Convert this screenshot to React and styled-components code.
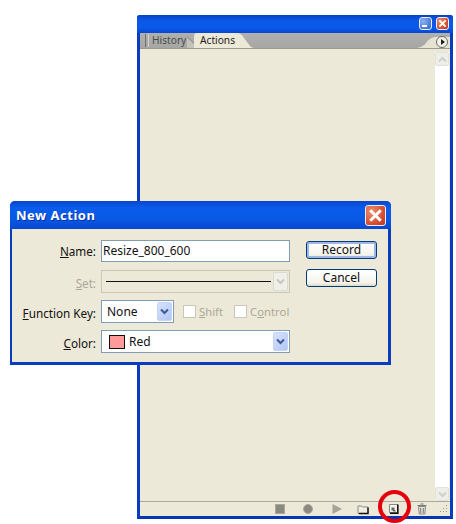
import React from "react";
import styled, { createGlobalStyle } from "styled-components";

const GlobalStyle = createGlobalStyle`
  html, body { margin: 0; padding: 0; background: #fff; }
  body { font-family: "Noto Sans", "Liberation Sans", Arial, sans-serif; }
`;

const Page = styled.div`
  position: relative;
  width: 456px;
  height: 524px;
  overflow: hidden;
  padding: 15px 3px 5px 137px;
  box-sizing: border-box;
`;

const Panel = styled.div`
  height: 100%;
  display: flex;
  flex-direction: column;
  box-sizing: border-box;
  border: solid #0a3cc0;
  border-width: 0 3px 3px 3px;
  border-bottom-color: #0636b4;
  border-radius: 3px 3px 0 0;
  background: #ece9d8;
`;

const PanelTitle = styled.div`
  height: 18px;
  flex: none;
  margin: 0 -3px;
  padding: 2px 4px 0 0;
  box-sizing: border-box;
  display: flex;
  justify-content: flex-end;
  gap: 4px;
  border-radius: 3px 3px 0 0;
  background: linear-gradient(#0b3fc6 0%, #0a58e6 30%, #0a5aea 70%, #0648d2 100%);
`;

const TitleButton = styled.div`
  width: ${(p) => p.$size}px;
  height: ${(p) => p.$size}px;
  box-sizing: border-box;
  border: 1px solid #e8eefa;
  border-radius: 3px;
  display: flex;
  align-items: center;
  justify-content: center;
  background: ${(p) =>
    p.$close
      ? "radial-gradient(circle at 30% 30%, #ec8f70, #d4482a 70%, #b8381c)"
      : "radial-gradient(circle at 30% 30%, #8fb0ee, #3f70d8 80%)"};
`;

const TabStrip = styled.div`
  height: 15px;
  flex: none;
  display: flex;
  align-items: flex-end;
  padding-left: 5px;
  background: linear-gradient(#b0b0ae, #a6a6a4);
  border-bottom: 1px solid #9c9a8c;
  position: relative;
`;

const GripLine = styled.div`
  width: 2px;
  height: 13px;
  margin-bottom: 1px;
  flex: none;
  border-left: 1px solid #70706c;
  border-right: 1px solid #cfcfcc;
`;

const Tab = styled.div`
  height: 15px;
  box-sizing: border-box;
  flex: none;
  font-size: 10.2px;
  line-height: 15px;
  color: ${(p) => (p.$active ? "#1c1c1c" : "#4a4a48")};
`;

const HistoryTab = styled(Tab)`
  width: 45px;
  padding-left: 3px;
  position: relative;
  &::after {
    content: "";
    position: absolute;
    right: 0;
    bottom: 0;
    width: 7px;
    height: 14px;
    background: linear-gradient(45deg, #c4c3ba 45%, #8c8c88 60%, transparent 62%);
  }
`;

const ActionsTab = styled(Tab)`
  width: 60px;
  padding-left: 6px;
  background: #ece9d8;
  clip-path: path("M0 15 V3 Q0 0 3 0 H43 Q47 0 50 5 L56 13 Q58 15 60 15 Z");
`;

const CornerFlap = styled.div`
  position: absolute;
  right: 0;
  bottom: 0;
  width: 33px;
  height: 11px;
  background: #e6e3d2;
  clip-path: path("M0 11 Q6 10 9 6 Q12 1 18 0 H33 V11 Z");
`;

const MenuButton = styled.div`
  position: absolute;
  right: 2px;
  bottom: 0;
  width: 10px;
  height: 10px;
  border: 1px solid #6a6a60;
  border-radius: 50%;
  background: #f4f3ea;
  display: flex;
  align-items: center;
  justify-content: center;
  &::after {
    content: "";
    border-left: 4px solid #1c1c1c;
    border-top: 3px solid transparent;
    border-bottom: 3px solid transparent;
    margin-left: 1px;
  }
`;

const Body = styled.div`
  flex: 1;
  display: flex;
  justify-content: flex-end;
  padding-right: 1px;
  min-height: 0;
`;

const ScrollBar = styled.div`
  width: 14px;
  padding-top: 3px;
  display: flex;
  flex-direction: column;
  justify-content: space-between;
  background: linear-gradient(#ece9d8 3px, #fff 3px);
`;

const ScrollButton = styled.div`
  height: 14px;
  box-sizing: border-box;
  border: 1px solid #e4e2d8;
  border-radius: 2px;
  background: #eeeeea;
  display: flex;
  align-items: center;
  justify-content: center;
`;

const BottomBar = styled.div`
  height: 14px;
  flex: none;
  display: flex;
  align-items: center;
  justify-content: flex-end;
  padding-right: 2px;
  border-top: 1px solid #aca899;
  background: #ece9d8;
`;

const ToolIcon = styled.svg`
  display: block;
  width: 12px;
  height: 12px;
  flex: none;
  margin-left: ${(p) => p.$gap}px;
`;

const RedRing = styled.div`
  position: absolute;
  left: 378px;
  top: 490px;
  width: 33px;
  height: 33px;
  box-sizing: border-box;
  border: 4px solid #e5000b;
  border-radius: 50%;
`;

const Dialog = styled.div`
  position: absolute;
  left: 10px;
  top: 201px;
  width: 381px;
  height: 164px;
  box-sizing: border-box;
  border: solid #0a3cc0;
  border-width: 0 3px 3px 2px;
  border-radius: 5px 5px 0 0;
  background: #ece9d8;
`;

const DialogTitle = styled.div`
  height: 28px;
  margin: 0 -3px 0 -2px;
  padding: 0 5px 0 6px;
  display: flex;
  align-items: center;
  justify-content: space-between;
  border-radius: 5px 5px 0 0;
  background: linear-gradient(#0a46cc 0%, #0a5cec 25%, #0a58e4 65%, #0648d2 100%);
`;

const DialogCaption = styled.div`
  color: #fff;
  font: bold 13px/1 "Noto Sans", Arial, sans-serif;
  letter-spacing: 0.5px;
  text-shadow: 1px 1px 0 #0a2f9c;
`;

const DialogBody = styled.div`
  display: grid;
  grid-template-columns: 84px 189px 1fr;
  column-gap: 5px;
  row-gap: 7px;
  padding-top: 11px;
  grid-auto-rows: 23px;
  align-items: start;
`;

const Label = styled.div`
  text-align: right;
  font-size: 11.7px;
  line-height: ${(p) => p.$line || 26}px;
  color: ${(p) => (p.$disabled ? "#aca899" : "#111")};
  u { text-underline-offset: 1px; }
`;

const Field = styled.div`
  height: ${(p) => p.$h || 22}px;
  box-sizing: border-box;
  border: 1px solid ${(p) => (p.$disabled ? "#c9c7ba" : "#7f9db9")};
  background: ${(p) => (p.$disabled ? "#ece9d8" : "#fff")};
  font-size: 12px;
  line-height: 20px;
  color: #111;
  display: flex;
  align-items: center;
  padding-left: 1px;
`;

const Line = styled.div`
  flex: 1;
  height: 1px;
  margin: 0 2px 0 3px;
  background: #111;
`;

const Arrow = styled.div`
  width: 15px;
  align-self: stretch;
  margin: 1px;
  margin-left: auto;
  flex: none;
  border-radius: 2px;
  display: flex;
  align-items: center;
  justify-content: center;
  background: ${(p) =>
    p.$disabled ? "#f0efe8" : "linear-gradient(135deg, #d8e2fb, #b2c6f4)"};
  border: 1px solid ${(p) => (p.$disabled ? "#dcdbd0" : "#c5d3f6")};
  box-sizing: border-box;
`;

const ButtonColumn = styled.div`
  grid-column: 3;
  grid-row: 1 / span 4;
  display: flex;
  flex-direction: column;
  gap: 10px;
  padding: 1px 0 0 11px;
`;

const ActionButton = styled.div`
  width: 69px;
  height: 16px;
  border: 1px solid #003c74;
  border-radius: 3px;
  font-size: 12px;
  line-height: 16px;
  text-align: center;
  color: #111;
  background: linear-gradient(#fff, #f4f3ec 80%, #dcd8c8);
  box-shadow: ${(p) => (p.$default ? "inset 0 0 0 2px #9db8e8" : "none")};
`;

const KeyRow = styled.div`
  display: flex;
  align-items: center;
  height: 23px;
`;

const KeySelect = styled(Field)`
  width: 73px;
  flex: none;
  padding-left: 5px;
  height: 23px;
`;

const CheckBox = styled.span`
  width: 11px;
  height: 11px;
  flex: none;
  border: 1px solid #c9c7ba;
  background: #fff;
  margin: 0 3px 0 ${(p) => p.$gap}px;
`;

const CheckLabel = styled.span`
  font-size: 11.3px;
  color: #aca899;
`;

const Swatch = styled.span`
  width: 14px;
  height: 12px;
  flex: none;
  margin: 0 4px 0 6px;
  border: 1px solid #111;
  background: #ff9a9a;
`;

const Chevron = ({ color = "#3a5a9a" }) => (
  <svg width="9" height="7" viewBox="0 0 9 7">
    <path d="M1 1.5 L4.5 5 L8 1.5" fill="none" stroke={color} strokeWidth="2" />
  </svg>
);

const CloseGlyph = ({ size }) => (
  <svg width={size} height={size} viewBox="0 0 10 10">
    <path d="M1.5 1.5 L8.5 8.5 M8.5 1.5 L1.5 8.5" stroke="#fff" strokeWidth="2" />
  </svg>
);

function App() {
  return (
    <Page>
      <GlobalStyle />
      <Panel>
        <PanelTitle>
          <TitleButton $size={13}>
            <svg width="9" height="9" viewBox="0 0 9 9">
              <rect x="1" y="6" width="5" height="2" fill="#fff" />
            </svg>
          </TitleButton>
          <TitleButton $size={13} $close>
            <CloseGlyph size={9} />
          </TitleButton>
        </PanelTitle>
        <TabStrip>
          <GripLine />
          <HistoryTab>History</HistoryTab>
          <ActionsTab $active>Actions</ActionsTab>
          <CornerFlap />
          <MenuButton />
        </TabStrip>
        <Body>
          <ScrollBar>
            <ScrollButton>
              <svg width="9" height="7" viewBox="0 0 9 7">
                <path d="M1 5.5 L4.5 2 L8 5.5" fill="none" stroke="#d0cfc4" strokeWidth="2" />
              </svg>
            </ScrollButton>
            <ScrollButton>
              <Chevron color="#d0cfc4" />
            </ScrollButton>
          </ScrollBar>
        </Body>
        <BottomBar>
          <ToolIcon viewBox="0 0 12 12" $gap={0}>
            <rect x="1.5" y="1.5" width="9" height="9" fill="#8b8a80" stroke="#aaa89c" />
          </ToolIcon>
          <ToolIcon viewBox="0 0 12 12" $gap={16}>
            <circle cx="6" cy="6" r="4.5" fill="#8b8a80" stroke="#aaa89c" />
          </ToolIcon>
          <ToolIcon viewBox="0 0 12 12" $gap={17}>
            <path d="M1.5 1 L11 6 L1.5 11 Z" fill="#a5a498" />
          </ToolIcon>
          <ToolIcon viewBox="0 0 12 12" $gap={14}>
            <path d="M1 10.5 V3 H4.5 L5.5 4 H11 V10.5 Z" fill="#f0eee0" stroke="#888" />
            <path d="M11 4.5 V10.5 H2" fill="none" stroke="#111" strokeWidth="1.4" />
          </ToolIcon>
          <ToolIcon viewBox="0 0 12 12" $gap={19}>
            <path d="M1.5 1.5 H9.5 V9.5 H1.5 Z" fill="#f5f4ea" stroke="#888" strokeWidth="1" />
            <path d="M3.5 4.5 H6.5 V7 H7.5 V8.5 H5 V7.5 H3.5 Z" fill="#666" />
            <path d="M9.8 1.5 V10.2 H2" fill="none" stroke="#111" strokeWidth="1.6" />
          </ToolIcon>
          <ToolIcon viewBox="0 0 12 12" $gap={16}>
            <path d="M2.5 3.5 H9.5 L8.8 11 H3.2 Z" fill="#e4e2d6" stroke="#888" />
            <path d="M1.5 2.5 H10.5 M4.5 1 H7.5 M4.7 5 V10 M7.3 5 V10" stroke="#777" fill="none" />
          </ToolIcon>
          <ToolIcon viewBox="0 0 12 12" $gap={8}>
            <path d="M10 2 h1 v1 h-1 z M7 5 h1 v1 h-1 z M10 5 h1 v1 h-1 z M4 8 h1 v1 h-1 z M7 8 h1 v1 h-1 z M10 8 h1 v1 h-1 z" fill="#9a9888" />
          </ToolIcon>
        </BottomBar>
      </Panel>

      <Dialog>
        <DialogTitle>
          <DialogCaption>New Action</DialogCaption>
          <TitleButton $size={21} $close>
            <CloseGlyph size={15} />
          </TitleButton>
        </DialogTitle>
        <DialogBody>
          <Label $line={22}>
            <u>N</u>ame:
          </Label>
          <Field>Resize_800_600</Field>
          <ButtonColumn>
            <ActionButton $default>Record</ActionButton>
            <ActionButton>Cancel</ActionButton>
          </ButtonColumn>

          <Label $disabled>
            <u>S</u>et:
          </Label>
          <Field $disabled $h={23}>
            <Line />
            <Arrow $disabled>
              <Chevron color="#c8c7bc" />
            </Arrow>
          </Field>

          <Label>
            <u>F</u>unction Key:
          </Label>
          <KeyRow>
            <KeySelect>
              None
              <Arrow>
                <Chevron />
              </Arrow>
            </KeySelect>
            <CheckBox $gap={9} />
            <CheckLabel>
              <u>S</u>hift
            </CheckLabel>
            <CheckBox $gap={11} />
            <CheckLabel>
              C<u>o</u>ntrol
            </CheckLabel>
          </KeyRow>

          <Label>
            <u>C</u>olor:
          </Label>
          <Field $h={23}>
            <Swatch />
            Red
            <Arrow>
              <Chevron />
            </Arrow>
          </Field>
        </DialogBody>
      </Dialog>
      <RedRing />
    </Page>
  );
}

export default App;
